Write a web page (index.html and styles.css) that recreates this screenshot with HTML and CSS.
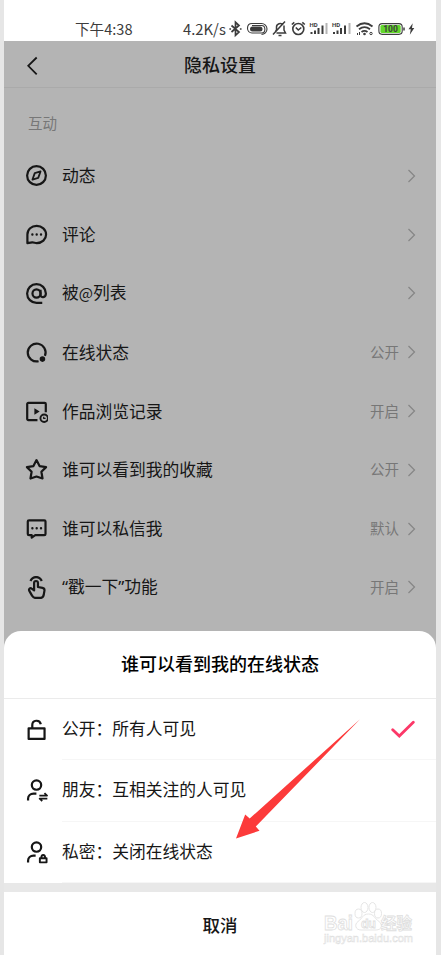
FILE: index.html
```html
<!DOCTYPE html>
<html lang="zh-CN">
<head>
  <meta charset="UTF-8">
  <meta name="viewport" content="width=device-width, initial-scale=1.0">
  <title>隐私设置</title>
  <link rel="stylesheet" href="styles.css">
</head>
<body>
  <div class="phone">
    <div class="status-bar">
      <span class="time">下午4:38</span>
      <span class="speed">4.2K/s</span>
      <svg class="status-icons" viewBox="228 18 190 22" width="190" height="22">
        <!-- bluetooth -->
        <path d="M231.500 25.500l7.500 6.500-3.500 3.300v-13l3.500 3.200-7.500 6.500M230.200 28.200v1.600M240.700 28.200v1.600" stroke-width="1.700"/>
        <!-- nfc pill -->
        <path d="M252 23.500h9.500a5.200 5.200 0 0 1 0 11M252 23.500c-3 0-4.500 2-4.500 4.800s2 4.700 4.500 4.700h9.500c4.500 0 4.500-7.500 0-7.500h-9.500" stroke-width="1.100"/>
        <rect class="solid" x="250" y="26.500" width="12.500" height="5" rx="2.500"/>
        <!-- muted bell -->
        <path d="M273 34.500l12-13M275.500 31.500l1-1.500v-3c0-3 4.500-4.800 6.500-2M284 25.500v4.500l1.500 3h-9M278.500 35.500h3" stroke-width="1.500"/>
        <!-- alarm -->
        <circle cx="298.300" cy="29" r="5.500" stroke-width="1.600"/>
        <path d="M295.800 27.500l2.500 2.500 3-2.500M291.800 24.500l2.500-2.200M302.300 22.300l2.500 2.200" stroke-width="1.600"/>
        <!-- signals -->
        <text x="309.500" y="26.500">HD</text>
        <path d="M311.500 32v2M315 30.500v3.500M318.500 28v6M322.500 25.500v8.500" stroke-width="2"/>
        <path class="faint" d="M326.500 23v11" stroke-width="2"/>
        <text x="332" y="26.500">HD</text>
        <path d="M334 32v2M337.500 30.500v3.500M341 28v6M345 25.500v8.500" stroke-width="2"/>
        <path class="faint" d="M349.500 23v11" stroke-width="2"/>
        <!-- wifi -->
        <path d="M356.500 26.500q8-6.500 16 0M359 29.300q5.500-4.300 11 0M361.500 32q3-2.300 6 0" stroke-width="1.800"/>
        <circle class="solid" cx="364.500" cy="34" r="1.300"/>
        <path d="M357.500 33v2M359.500 32v3"/>
        <circle cx="371" cy="33.500" r="1.200"/>
        <!-- battery -->
        <rect x="378.900" y="23.600" width="23.300" height="10.800" rx="3.300" stroke-width="1.100"/>
        <rect class="charge" x="380.400" y="25.100" width="20.300" height="7.800" rx="1.500"/>
        <text class="percent" x="390.500" y="32" text-anchor="middle">100</text>
        <path d="M404 27.500v3" stroke-width="1.500"/>
        <path class="solid" d="M412.700 23.300l-4.200 6h2.300l-1 5.500 4.500-6.800h-2.300z"/>
      </svg>
    </div>

    <div class="page">
      <header class="nav">
        <svg class="back" viewBox="0 0 12 20" width="12" height="20"><path d="M9.700 1.500L1.200 9.800l8.500 8.500"/></svg>
        <h1>隐私设置</h1>
      </header>

      <div class="section-title">互动</div>
      <ul class="settings">
        <li>
          <svg class="icon" viewBox="0 0 24 24"><circle cx="12" cy="12" r="9.800"/><path d="M16.200 7.800l-6 1.700L7.800 16.200l6-1.700z" stroke-width="1.900"/></svg>
          <span class="name">动态</span>
          <svg class="arrow" viewBox="0 0 8 14"><path d="M1 1l6 6-6 6"/></svg>
        </li>
        <li>
          <svg class="icon" viewBox="0 0 24 24"><path d="M2.500 21V12C2.500 6.500 6.800 3 12.200 3S22 6.800 22 12s-4.200 9-9.800 9c-1.700 0-3-.9-4.700-.7z"/><path class="dots" d="M7.700 12h.01M12.200 12h.01M16.700 12h.01"/></svg>
          <span class="name">评论</span>
          <svg class="arrow" viewBox="0 0 8 14"><path d="M1 1l6 6-6 6"/></svg>
        </li>
        <li>
          <svg class="icon" viewBox="0 0 24 24"><circle cx="12" cy="12" r="4.200"/><path d="M16.200 8v5.500c0 3.300 5.600 3.200 5.600-1.500a9.800 9.800 0 1 0-9.800 9.800h6"/></svg>
          <span class="name">被<span class="at">@</span>列表</span>
          <svg class="arrow" viewBox="0 0 8 14"><path d="M1 1l6 6-6 6"/></svg>
        </li>
        <li>
          <svg class="icon" viewBox="0 0 24 24"><path d="M20.800 15.500a9.300 9.300 0 1 0-6.600 5.600"/><circle class="solid" cx="18.200" cy="18.900" r="2.900"/></svg>
          <span class="name">在线状态</span>
          <span class="value">公开</span>
          <svg class="arrow" viewBox="0 0 8 14"><path d="M1 1l6 6-6 6"/></svg>
        </li>
        <li>
          <svg class="icon" viewBox="0 0 24 24"><path d="M13 21H3.500a1.200 1.200 0 0 1-1.200-1.200V4.200c0-.7.500-1.200 1.200-1.200h17c.7 0 1.200.5 1.200 1.200v8.500"/><path class="solid" d="M9.800 8.500v7l5.500-3.500z"/><circle cx="20" cy="19" r="3.900" stroke-width="2"/><path d="M19.500 17.500v1.800h2" stroke-width="1.300"/></svg>
          <span class="name">作品浏览记录</span>
          <span class="value">开启</span>
          <svg class="arrow" viewBox="0 0 8 14"><path d="M1 1l6 6-6 6"/></svg>
        </li>
        <li>
          <svg class="icon" viewBox="0 0 24 24"><path d="M12 2.200l3.200 6.200 6.800 1.100-4.900 4.900 1.200 7-6.300-2.100-6.300 2.100 1.200-7L2 9.500l6.800-1.100z"/></svg>
          <span class="name">谁可以看到我的收藏</span>
          <span class="value">公开</span>
          <svg class="arrow" viewBox="0 0 8 14"><path d="M1 1l6 6-6 6"/></svg>
        </li>
        <li>
          <svg class="icon" viewBox="0 0 24 24"><path d="M4.200 3.500h15.900c.8 0 1.300.5 1.300 1.300v12.900c0 .8-.5 1.300-1.300 1.300h-9.400L7 21.600V19H4.200c-.8 0-1.300-.5-1.300-1.300V4.800c0-.8.500-1.300 1.300-1.300z"/><path class="dots" d="M7.700 11.700h.01M12.200 11.700h.01M16.700 11.700h.01"/></svg>
          <span class="name">谁可以私信我</span>
          <span class="value">默认</span>
          <svg class="arrow" viewBox="0 0 8 14"><path d="M1 1l6 6-6 6"/></svg>
        </li>
        <li>
          <svg class="icon" viewBox="0 0 24 24"><path d="M5.700 5.200c2.500-5.500 9.300-5.500 11.800 0"/><path d="M9.500 15V7.200a2 2 0 0 1 4 0v4.300l4.700.9c1.500.3 2.300 1.400 2.100 2.800l-.8 4.700c-.4 1.900-1.500 3-3.300 3H11c-1.700 0-2.700-.7-3.500-2.200l-3-5.200c-1-2.100 1-3.500 2.500-2.300z"/></svg>
          <span class="name poke">“戳一下”功能</span>
          <span class="value">开启</span>
          <svg class="arrow" viewBox="0 0 8 14"><path d="M1 1l6 6-6 6"/></svg>
        </li>
      </ul>
    </div>

    <div class="sheet">
      <h2>谁可以看到我的在线状态</h2>
      <ul class="options">
        <li>
          <svg class="icon" viewBox="0 0 24 24"><path d="M3.800 10.800h16.600v11H3.800zM7.600 10.500V7.300c0-5.500 7.800-6 8.900-.8"/></svg>
          <div class="option">
            <span>公开：所有人可见</span>
            <svg class="check" viewBox="0 0 24 18"><path d="M1.700 9.700l6.600 6.300L22.300 2.200"/></svg>
          </div>
        </li>
        <li>
          <svg class="icon" viewBox="0 0 24 24"><circle cx="12" cy="6.300" r="4.900"/><path d="M3.200 22.500v-2c0-3.300 2.500-5.200 5.700-5.200h3"/><path d="M15 17.300h8l-2.700-2.500M23.300 20.500h-8l2.700 2.500" stroke-width="1.900"/></svg>
          <div class="option"><span>朋友：互相关注的人可见</span></div>
        </li>
        <li>
          <svg class="icon" viewBox="0 0 24 24"><circle cx="12" cy="6.300" r="4.900"/><path d="M3.200 22.500v-2c0-3.300 2.500-5.200 5.700-5.200h2.200"/><path d="M15.500 18h7v4.300h-7zM17 17.700c0-4.200 4-4.200 4 0" stroke-width="2"/></svg>
          <div class="option"><span>私密：关闭在线状态</span></div>
        </li>
      </ul>
      <button class="cancel">取消</button>

      <svg class="pointer" viewBox="0 0 124 120" width="124" height="120"><path d="M124 .2L19.800 107.500l3.700 4.300L0 119.500 9.200 95.500l4.500 4z"/></svg>
      <svg class="watermark" viewBox="0 0 94 48" width="94" height="48">
        <ellipse cx="35.500" cy="12.500" rx="3.500" ry="4.500"/>
        <ellipse cx="41.500" cy="6.500" rx="3.500" ry="5"/>
        <ellipse cx="49.500" cy="6.500" rx="3.500" ry="5"/>
        <ellipse cx="55" cy="12.500" rx="3.500" ry="4.500"/>
        <path d="M45.500 13c-6 0-6 4.500-10.500 7.500-4 3-2.500 8.500 3 8.500h15c6 0 7-5.500 3-8.500-4.500-3-5-7.500-10.500-7.500z"/>
        <text class="brand" x="1" y="28.500" textLength="29" lengthAdjust="spacingAndGlyphs">Bai</text>
        <text class="du" x="38" y="27" textLength="15">du</text>
        <text class="brand cn" x="58" y="28" textLength="31">经验</text>
        <text class="site" x="1" y="41" textLength="89" lengthAdjust="spacingAndGlyphs">jingyan.baidu.com</text>
      </svg>
    </div>
  </div>
</body>
</html>
```

FILE: styles.css
```css
* {
  box-sizing: border-box;
}
body {
  margin: 0;
  background: #e6e6e6;
  font-family: "Noto Sans CJK SC", "Noto Sans", sans-serif;
  color: #161616;
}
h1, h2, ul {
  margin: 0;
  padding: 0;
}
ul {
  list-style: none;
}
svg {
  flex-shrink: 0;
  fill: none;
  stroke: currentColor;
}
.phone {
  position: relative;
  width: 432px;
  height: 955px;
  margin-left: 4px;
  overflow: hidden;
  background: #b4b4b4;
}

/* status bar */
.status-bar {
  display: flex;
  align-items: center;
  height: 41px;
  padding: 16px 0 0 71px;
  background: #fff;
  color: #3c3c3c;
  font-size: 15px;
  line-height: 22px;
}
.time {
  width: 108px;
  font-size: 14.600px;
}
.speed {
  width: 45px;
  font-size: 14.800px;
  white-space: nowrap;
}
.status-icons .solid {
  fill: #3c3c3c;
  stroke: none;
}
.status-icons .faint {
  stroke: #b5b5b5;
}
.status-icons text {
  fill: #3c3c3c;
  stroke: none;
  font: bold 6px "Roboto", sans-serif;
}
.status-icons .charge {
  fill: #62d72b;
  stroke: none;
}
.status-icons .percent {
  font-size: 8.5px;
}

/* settings page */
.nav {
  display: flex;
  align-items: center;
  height: 47px;
  padding: 3px 24px 0 23px;
  border-bottom: 1px solid #aaa;
}
.back {
  stroke-width: 1.8;
}
h1 {
  flex: 1;
  padding: 0 11px 4px 0;
  font-size: 18px;
  font-weight: 500;
  line-height: 24px;
  text-align: center;
}
.section-title {
  padding: 24px 24px 0;
  height: 58.500px;
  color: #777;
  font-size: 14.500px;
  line-height: 22px;
}
.settings li {
  display: flex;
  align-items: center;
  height: 58.800px;
  padding: 0 20px 0 21px;
}
.icon {
  width: 23px;
  height: 23px;
  margin-right: 14px;
  stroke-width: 2.3;
  stroke-linejoin: round;
}
.icon .dots {
  stroke-width: 2.5;
  stroke-linecap: round;
}
.icon .solid {
  fill: currentColor;
  stroke: none;
}
.name {
  flex: 1;
  padding-bottom: 1px;
  font-size: 16.750px;
  line-height: 24px;
}
.at {
  font-size: 15px;
}
.poke {
  font-family: "Noto Sans", "Noto Sans CJK SC", sans-serif;
}
.value {
  margin-right: 8px;
  padding-bottom: 2px;
  color: #777;
  font-size: 14.500px;
}
.arrow {
  width: 9px;
  height: 14px;
  color: #858585;
  stroke-width: 1.2;
}

/* bottom sheet */
.sheet {
  position: absolute;
  left: 0;
  right: 0;
  bottom: 0;
  height: 324px;
  border-radius: 17px 17px 0 0;
  background: #fff;
}
h2 {
  height: 68px;
  padding-top: 19px;
  border-bottom: 1px solid #ebebeb;
  color: #000;
  font-size: 18px;
  font-weight: 500;
  line-height: 26px;
  text-align: center;
}
.options li {
  display: flex;
  align-items: center;
  height: 61.300px;
  padding-left: 21px;
}
.option {
  display: flex;
  flex: 1;
  align-items: center;
  justify-content: space-between;
  height: 100%;
  padding-right: 21px;
  border-bottom: 1px solid #f6f6f6;
  font-size: 16.750px;
  line-height: 24px;
}
.option span {
  padding-bottom: 2px;
}
.check {
  width: 24px;
  height: 18px;
  color: #fc3868;
  stroke-width: 2.8;
  stroke-linecap: round;
}
.cancel {
  display: block;
  width: 100%;
  height: 72px;
  padding: 2px 0 0;
  border: none;
  border-top: 9px solid #e8e8e8;
  background: #fff;
  color: #161616;
  font: 500 17.500px "Noto Sans CJK SC", sans-serif;
}
.pointer {
  position: absolute;
  left: 232px;
  top: 88px;
  fill: #fc3a3a;
  stroke: none;
}
.watermark {
  position: absolute;
  left: 319px;
  top: 270px;
  fill: #fff;
  stroke: #dedede;
  stroke-width: 0.8;
}
.watermark text {
  font-family: "Liberation Sans", "Noto Sans CJK SC", sans-serif;
}
.watermark .brand {
  font-size: 20px;
  font-weight: bold;
}
.watermark .cn {
  font-size: 15.500px;
}
.watermark .du {
  font-size: 12.500px;
  font-weight: bold;
}
.watermark .site {
  font-size: 10.500px;
  stroke-width: 0.5;
}
```
